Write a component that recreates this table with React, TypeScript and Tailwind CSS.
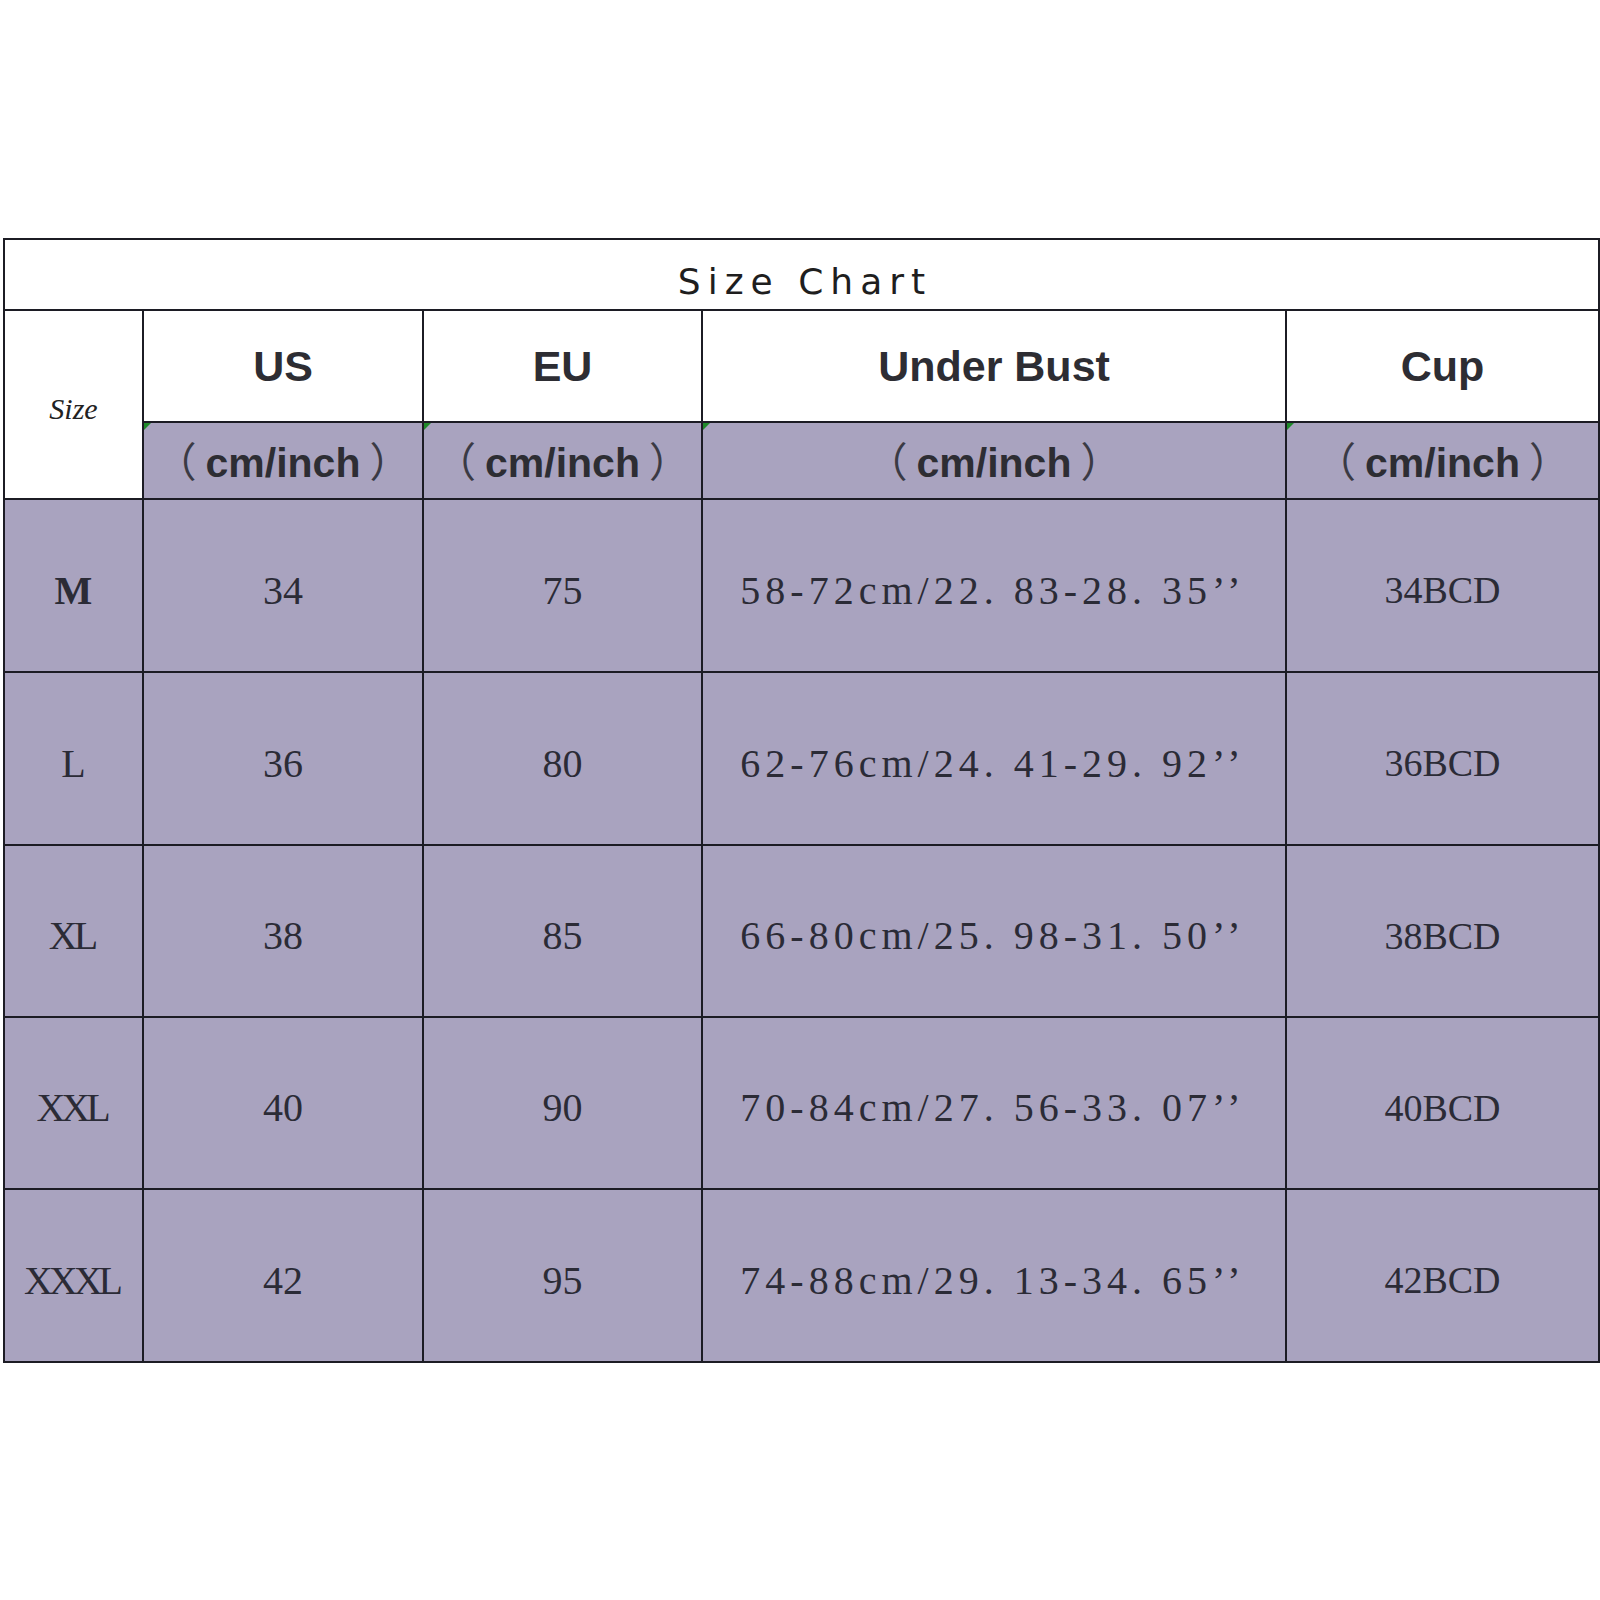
import { JSX } from 'react';

const rows = [
  { size: 'M', us: '34', eu: '75', bust: '58-72cm/22. 83-28. 35’’', cup: '34BCD' },
  { size: 'L', us: '36', eu: '80', bust: '62-76cm/24. 41-29. 92’’', cup: '36BCD' },
  { size: 'XL', us: '38', eu: '85', bust: '66-80cm/25. 98-31. 50’’', cup: '38BCD' },
  { size: 'XXL', us: '40', eu: '90', bust: '70-84cm/27. 56-33. 07’’', cup: '40BCD' },
  { size: 'XXXL', us: '42', eu: '95', bust: '74-88cm/29. 13-34. 65’’', cup: '42BCD' },
];

const heads = ['US', 'EU', 'Under Bust', 'Cup'];

const cell = 'flex items-center justify-center border-r-2 border-b-2 border-[#1c1c24]';
const serif = "font-['Liberation_Serif','Times_New_Roman',serif]";
const sans = "font-['Liberation_Sans','Noto_Sans_CJK_SC',sans-serif]";

function Flag(): JSX.Element {
  return (
    <span className="absolute left-0 top-0 w-0 h-0 border-t-[7px] border-r-[7px] border-t-[#1f8a2a] border-r-transparent" />
  );
}

export default function App(): JSX.Element {
  return (
    <div className="w-[1600px] h-[1600px] bg-white pt-[238px] pl-[3px]">
      <div className="grid grid-cols-[139px_280px_279px_584px_313px] grid-rows-[71px_112px_77px_173px_173px_172px_172px_173px] w-fit border-l-2 border-t-2 border-[#1c1c24] text-[#2b2b36]">
        <div className={`${cell} col-span-5 bg-white pt-[14px]`}>
          <span className="font-['DejaVu_Sans',sans-serif] text-[36px] tracking-[7px] text-[#1e1e1e] pl-[7px]">
            Size Chart
          </span>
        </div>

        <div className={`${cell} row-span-2 bg-white pt-[8px]`}>
          <span className={`${serif} italic text-[30px] text-[#222]`}>Size</span>
        </div>
        {heads.map((h) => (
          <div key={h} className={`${cell} bg-white`}>
            <span className={`${sans} font-bold text-[43px] text-[#2d2d33]`}>{h}</span>
          </div>
        ))}
        {heads.map((h) => (
          <div key={`u-${h}`} className={`${cell} relative bg-[#a9a3bf] pt-[6px]`}>
            <Flag />
            <span className={`${sans} font-bold text-[41px] text-[#2d2d33]`}>
              <span className="font-normal text-[#3a3a44] mr-[9px]">（</span>cm/inch<span className="font-normal text-[#3a3a44] ml-[9px]">）</span>
            </span>
          </div>
        ))}

        {rows.map((r) => (
          <div key={r.size} className="contents">
            <div className={`${cell} bg-[#a9a3bf] pt-[10px]`}>
              <span className={`${serif} text-[40px] tracking-[-4px] pr-[4px] ${r.size === 'M' ? 'font-bold' : ''}`}>
                {r.size}
              </span>
            </div>
            <div className={`${cell} bg-[#a9a3bf] pt-[10px]`}>
              <span className={`${serif} text-[40px]`}>{r.us}</span>
            </div>
            <div className={`${cell} bg-[#a9a3bf] pt-[10px]`}>
              <span className={`${serif} text-[40px]`}>{r.eu}</span>
            </div>
            <div className={`${cell} bg-[#a9a3bf] pt-[10px]`}>
              <span className={`${serif} text-[40px] tracking-[5px] pr-[2px]`}>{r.bust}</span>
            </div>
            <div className={`${cell} bg-[#a9a3bf] pt-[10px]`}>
              <span className={`${serif} text-[38px]`}>{r.cup}</span>
            </div>
          </div>
        ))}
      </div>
    </div>
  );
}
